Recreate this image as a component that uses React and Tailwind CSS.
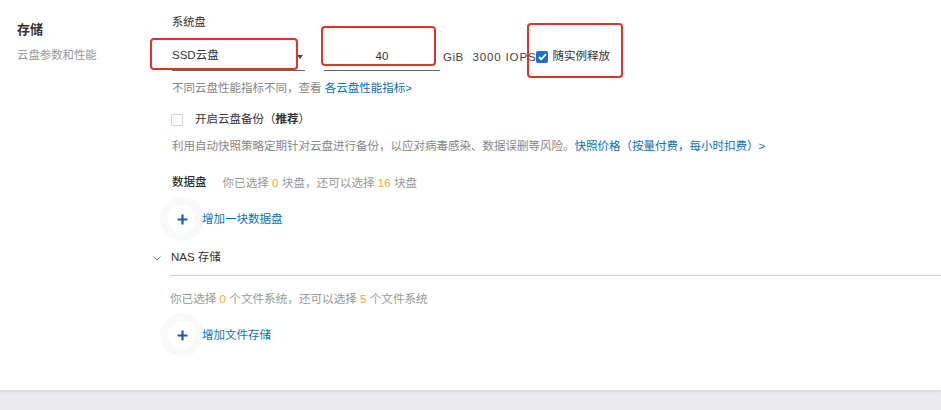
import React from "react";

const font = { fontFamily: "'Liberation Sans','Noto Sans CJK SC',sans-serif" };

function PlusButton({ label }) {
  return (
    <div className="flex items-center -ml-[12px]">
      <div className="w-[44px] h-[44px] rounded-full bg-[#f8f9fa] flex items-center justify-center">
        <div className="w-[28px] h-[28px] rounded-full bg-white flex items-center justify-center">
          <svg width="11" height="11" viewBox="0 0 11 11">
            <path d="M5.5 0.5v10M0.5 5.5h10" stroke="#1f5d9e" strokeWidth="2.2" />
          </svg>
        </div>
      </div>
      <span className="ml-[-2px] text-[11.5px] leading-[16px] text-[#0b6fc2]">{label}</span>
    </div>
  );
}

export default function App() {
  return (
    <div style={font} className="w-[941px] h-[410px] bg-[#ebebed] overflow-hidden">
      <div className="h-[390px] bg-white flex shadow-[0_1px_3px_rgba(0,0,0,0.12)] relative">
        <div className="w-[172px] pl-[17px] pt-[22px] shrink-0">
          <div className="text-[13px] leading-[16px] font-bold text-[#333]">存储</div>
          <div className="mt-[9px] text-[11.4px] leading-[16px] text-[#999]">云盘参数和性能</div>
        </div>
        <div className="flex-1 pt-[14px]">
          <div className="text-[11.3px] leading-[16px] text-[#333]">系统盘</div>
          <div className="relative mt-[11px] flex items-end h-[30px]">
            <div className="w-[133px] h-[30px] border-b border-[#666] flex items-center relative">
              <span className="text-[11.5px] text-[#333] pt-[1px]">SSD云盘</span>
              <span className="absolute right-[2px] top-[14px] w-0 h-0 border-l-[3px] border-r-[3px] border-t-[4px] border-l-transparent border-r-transparent border-t-[#444]"></span>
            </div>
            <div className="ml-[19px] w-[116px] h-[29px] border-b border-[#666] flex items-center justify-center">
              <span className="text-[11.5px] text-[#333] pt-[1px]">40</span>
            </div>
            <div className="h-[29px] flex items-center ml-[3px] text-[11.6px] text-[#444]">
              <span className="tracking-[0.4px]">GiB</span>
              <span className="ml-[9px] tracking-[0.8px]">3000 IOPS</span>
              <span className="ml-[0px] w-[12px] h-[12px] rounded-[2px] bg-[#1d6fcc] flex items-center justify-center">
                <svg width="9" height="8" viewBox="0 0 9 8">
                  <path d="M1 4l2.3 2.3L8 1.2" stroke="#fff" strokeWidth="1.8" fill="none" />
                </svg>
              </span>
              <span className="ml-[4px] text-[11.5px] text-[#333]">随实例释放</span>
            </div>
            <div className="absolute left-[-22px] top-[-3px] w-[148px] h-[32px] border-2 border-[#e0342a] rounded-[4px]"></div>
            <div className="absolute left-[149px] top-[-15px] w-[115px] h-[40px] border-2 border-[#e0342a] rounded-[4px]"></div>
            <div className="absolute left-[355px] top-[-18px] w-[96px] h-[55px] border-2 border-[#e0342a] rounded-[4px]"></div>
          </div>
          <div className="mt-[9px] text-[11.5px] leading-[16px] text-[#888]">
            不同云盘性能指标不同，查看 <span className="text-[#0b6fc2]">各云盘性能指标&gt;</span>
          </div>
          <div className="mt-[16px] flex items-center h-[16px]">
            <span className="w-[12px] h-[12px] border border-[#d4d4d4] rounded-[1px] -ml-[1px]"></span>
            <span className="ml-[12px] text-[11.5px] text-[#333]">
              开启云盘备份（<span className="font-bold">推荐</span>）
            </span>
          </div>
          <div className="mt-[10px] text-[11.5px] leading-[16px] text-[#888] whitespace-nowrap">
            利用自动快照策略定期针对云盘进行备份，以应对病毒感染、数据误删等风险。
            <span className="text-[#0b6fc2]">快照价格（按量付费，每小时扣费）&gt;</span>
          </div>
          <div className="mt-[21px] flex items-center h-[16px] text-[11.5px]">
            <span className="text-[#333] font-medium">数据盘</span>
            <span className="ml-[16px] text-[#999] text-[11.6px]">
              你已选择 <span className="text-[#f5a623]">0</span> 块盘，还可以选择 <span className="text-[#f5a623]">16</span> 块盘
            </span>
          </div>
          <div className="mt-[6px]">
            <PlusButton label="增加一块数据盘" />
          </div>
          <div className="mt-[9px] -ml-[19px] flex items-center h-[16px]">
            <svg width="8" height="5" viewBox="0 0 8 5">
              <path d="M0.5 0.5L4 4L7.5 0.5" stroke="#888" strokeWidth="1" fill="none" />
            </svg>
            <span className="ml-[10px] text-[11.5px] text-[#333]">NAS 存储</span>
          </div>
          <div className="mt-[9px] -ml-[2px] border-t border-[#d2d2d2] h-[1px] bg-[#f4f4f4]"></div>
          <div className="mt-[15px] -ml-[2px] text-[11.6px] leading-[16px] text-[#999]">
            你已选择 <span className="text-[#f5a623]">0</span> 个文件系统，还可以选择 <span className="text-[#f5a623]">5</span> 个文件系统
          </div>
          <div className="mt-[6px]">
            <PlusButton label="增加文件存储" />
          </div>
        </div>
      </div>
    </div>
  );
}
